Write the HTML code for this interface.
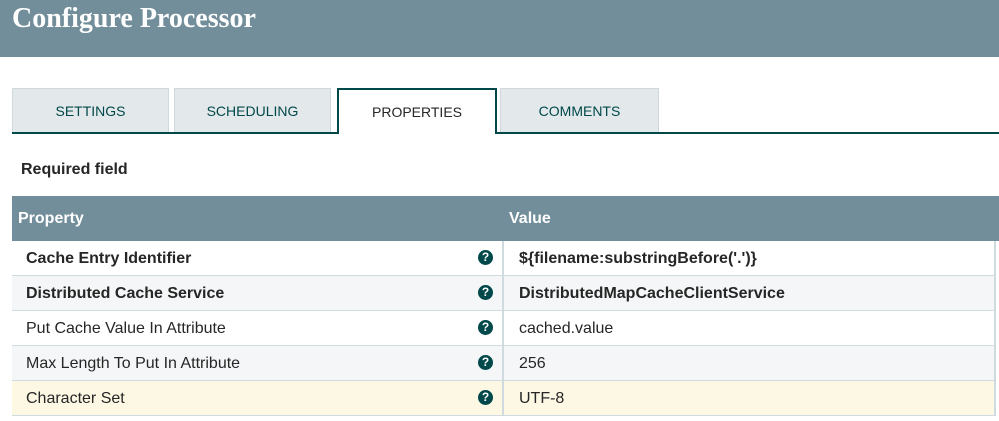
<!DOCTYPE html>
<html><head><style>
body{margin:0;width:999px;height:421px;overflow:hidden;background:#fff;font-family:"Liberation Sans",sans-serif;position:relative}
.hdr{position:absolute;left:0;top:0;width:999px;height:57px;background:#728e9b}
.hdr span{position:absolute;left:12px;top:3px;font-family:"Liberation Serif",serif;font-weight:bold;font-size:28px;color:#fff}
.tab{position:absolute;top:88px;height:44px;width:157px;background:#e3e8eb;border:1px solid #cfd8dc;border-bottom:none;color:#004849;font-size:14px;text-align:center;line-height:45px;box-sizing:border-box}
.line{position:absolute;top:132px;left:12px;width:987px;height:2px;background:#004849}
.act{background:#fff;border:2px solid #004849;border-bottom:none;height:46px;color:#262626;z-index:2}
.req{position:absolute;left:21px;top:161px;font-weight:bold;font-size:16px;color:#262626}
.th{position:absolute;left:12px;top:196px;width:987px;height:45px;background:#728e9b;color:#fff;font-weight:bold;font-size:16px}
.row{position:absolute;left:12px;width:982px;height:34px;border-bottom:1px solid #d0dbe0;border-right:2px solid #d0dbe0;font-size:16px;color:#262626}
.row div{position:absolute;top:9px}
.row .d{position:absolute;left:490px;top:0;width:2px;height:34px;background:#d0dbe0}
.q{position:absolute;left:466px;top:9px;width:15px;height:15px;border-radius:50%;background:#004849;color:#fff;font-size:12px;font-weight:bold;line-height:15px;text-align:center}
</style></head><body>
<div class="hdr"><span>Configure Processor</span></div>
<div class="line"></div>
<div class="tab" style="left:12px">SETTINGS</div>
<div class="tab" style="left:174px">SCHEDULING</div>
<div class="tab act" style="left:337px;width:160px">PROPERTIES</div>
<div class="tab" style="left:500px;width:159px">COMMENTS</div>
<div class="req">Required field</div>
<div class="th"><span style="position:absolute;left:6px;top:14px">Property</span><span style="position:absolute;left:497px;top:14px">Value</span></div>
<div class="row" style="top:241px;background:#fff"><div style="left:14px;font-weight:bold">Cache Entry Identifier</div><span class="q">?</span><span class="d"></span><div style="left:507px;font-weight:bold">${filename:substringBefore('.')}</div></div>
<div class="row" style="top:276px;background:#f4f6f7"><div style="left:14px;font-weight:bold">Distributed Cache Service</div><span class="q">?</span><span class="d"></span><div style="left:507px;font-weight:bold">DistributedMapCacheClientService</div></div>
<div class="row" style="top:311px;background:#fff"><div style="left:14px">Put Cache Value In Attribute</div><span class="q">?</span><span class="d"></span><div style="left:507px">cached.value</div></div>
<div class="row" style="top:346px;background:#f4f6f7"><div style="left:14px">Max Length To Put In Attribute</div><span class="q">?</span><span class="d"></span><div style="left:507px">256</div></div>
<div class="row" style="top:381px;background:#fdf8e4"><div style="left:14px">Character Set</div><span class="q">?</span><span class="d"></span><div style="left:507px">UTF-8</div></div>
</body></html>
